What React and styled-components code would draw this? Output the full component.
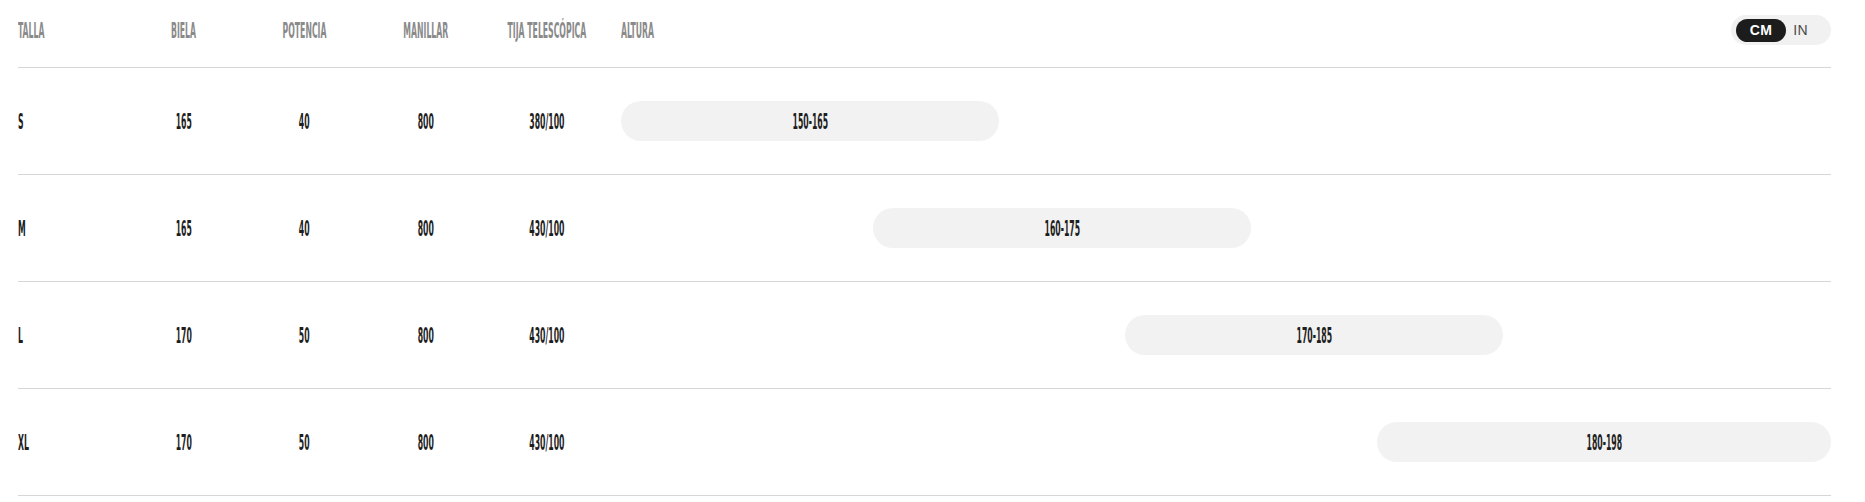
import React, { useState } from "react";
import styled, { createGlobalStyle } from "styled-components";

const GlobalStyle = createGlobalStyle`
  html, body {
    margin: 0;
    padding: 0;
    background: #fff;
  }
`;

const sizes = [
  { talla: "S", biela: "165", potencia: "40", manillar: "800", tija: "380/100", min: 150, max: 165 },
  { talla: "M", biela: "165", potencia: "40", manillar: "800", tija: "430/100", min: 160, max: 175 },
  { talla: "L", biela: "170", potencia: "50", manillar: "800", tija: "430/100", min: 170, max: 185 },
  { talla: "XL", biela: "170", potencia: "50", manillar: "800", tija: "430/100", min: 180, max: 198 },
];

const RANGE_MIN = 150;
const RANGE_MAX = 198;

const Wrapper = styled.div`
  padding: 0 34px 0 18px;
`;

const Row = styled.div`
  display: grid;
  grid-template-columns: 105px repeat(4, 121px) 1fr;
  align-items: center;
  height: ${(p) => (p.$head ? "60px" : "106px")};
  padding-bottom: ${(p) => (p.$head ? "7px" : "0")};
  border-bottom: 1px solid #d6d6d6;
`;

const Cell = styled.div`
  display: flex;
  align-items: center;
  justify-content: ${(p) => (p.$left ? "flex-start" : "center")};
  min-width: 0;
  line-height: 1;
`;

const Cond = styled.span`
  display: inline-block;
  flex: none;
  margin-top: 2px;
  font-family: "DejaVu Sans", sans-serif;
  font-stretch: condensed;
  font-size: 21px;
  font-weight: 700;
  color: ${(p) => (p.$muted ? "#8a8a8a" : "#1e1e1e")};
  text-transform: uppercase;
  white-space: nowrap;
  transform: scaleX(0.41);
  transform-origin: ${(p) => (p.$left ? "left center" : "center center")};
`;

const AlturaHead = styled.div`
  display: flex;
  align-items: center;
  justify-content: space-between;
  padding-left: 14px;
`;

const Track = styled.div`
  display: flex;
  padding-left: 14px;
`;

const Pill = styled.div`
  height: 40px;
  border-radius: 20px;
  background: #f2f2f2;
  display: flex;
  align-items: center;
  justify-content: center;
  flex: none;
`;

const Toggle = styled.div`
  display: flex;
  align-items: center;
  width: 100px;
  height: 30px;
  box-sizing: border-box;
  padding: 0 5px;
  border-radius: 15px;
  background: #f1f1f1;
`;

const ToggleBtn = styled.button`
  border: 0;
  cursor: pointer;
  height: 23px;
  border-radius: 12px;
  padding: 0;
  width: ${(p) => (p.$active ? "50px" : "29px")};
  background: ${(p) => (p.$active ? "#1c1c1c" : "transparent")};
  color: ${(p) => (p.$active ? "#fff" : "#4a4a4a")};
  font-family: "Liberation Sans", Arial, sans-serif;
  font-size: 14px;
  font-weight: ${(p) => (p.$active ? 700 : 400)};
  letter-spacing: 0.3px;
`;

export default function App() {
  const [unit, setUnit] = useState("cm");
  const span = RANGE_MAX - RANGE_MIN;

  return (
    <Wrapper>
      <GlobalStyle />
      <Row $head>
        <Cell $left>
          <Cond $muted $left>Talla</Cond>
        </Cell>
        <Cell>
          <Cond $muted>Biela</Cond>
        </Cell>
        <Cell>
          <Cond $muted>Potencia</Cond>
        </Cell>
        <Cell>
          <Cond $muted>Manillar</Cond>
        </Cell>
        <Cell>
          <Cond $muted>Tija telescópica</Cond>
        </Cell>
        <AlturaHead>
          <Cond $muted $left>Altura</Cond>
          <Toggle>
            <ToggleBtn $active={unit === "cm"} onClick={() => setUnit("cm")}>
              CM
            </ToggleBtn>
            <ToggleBtn $active={unit === "in"} onClick={() => setUnit("in")}>
              IN
            </ToggleBtn>
          </Toggle>
        </AlturaHead>
      </Row>
      {sizes.map((s) => (
        <Row key={s.talla}>
          <Cell $left>
            <Cond $left>{s.talla}</Cond>
          </Cell>
          <Cell>
            <Cond>{s.biela}</Cond>
          </Cell>
          <Cell>
            <Cond>{s.potencia}</Cond>
          </Cell>
          <Cell>
            <Cond>{s.manillar}</Cond>
          </Cell>
          <Cell>
            <Cond>{s.tija}</Cond>
          </Cell>
          <Track>
            <Pill
              style={{
                marginLeft: `${((s.min - RANGE_MIN) / span) * 100}%`,
                width: `${((s.max - s.min) / span) * 100}%`,
              }}
            >
              <Cond>
                {s.min}-{s.max}
              </Cond>
            </Pill>
          </Track>
        </Row>
      ))}
    </Wrapper>
  );
}
